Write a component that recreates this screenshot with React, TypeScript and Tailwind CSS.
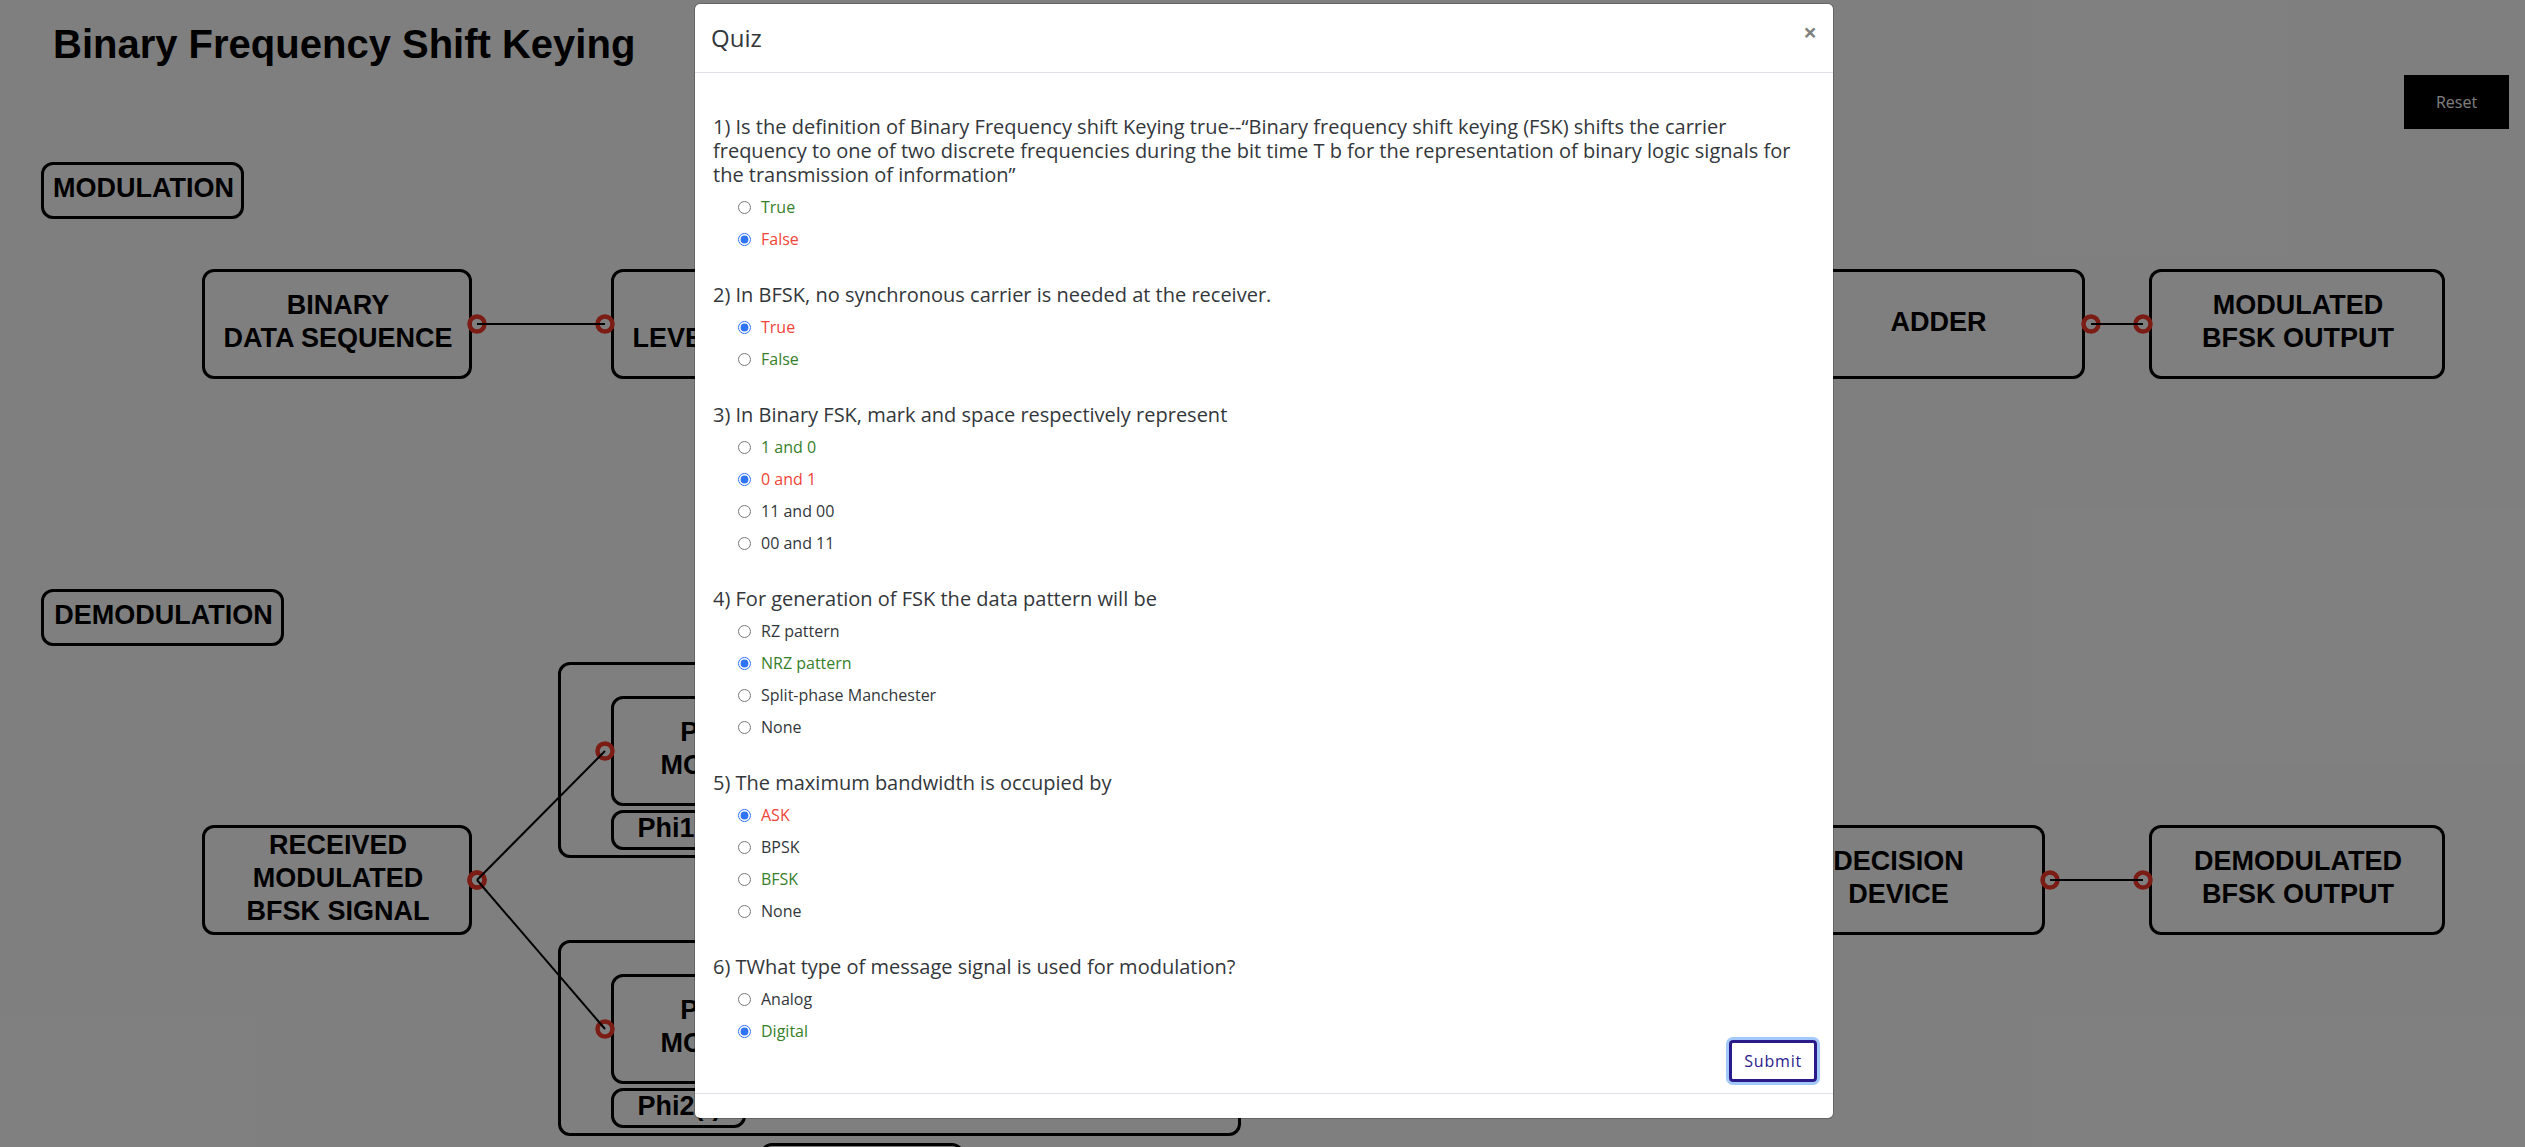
type Tone = "plain" | "right" | "wrong";
type Option = { label: string; tone?: Tone; checked?: boolean };
type Question = { text: string; options: Option[] };

const questions: Question[] = [
  {
    text: "1) Is the definition of Binary Frequency shift Keying true--“Binary frequency shift keying (FSK) shifts the carrier frequency to one of two discrete frequencies during the bit time T b for the representation of binary logic signals for the transmission of information”",
    options: [
      { label: "True", tone: "right" },
      { label: "False", tone: "wrong", checked: true },
    ],
  },
  {
    text: "2) In BFSK, no synchronous carrier is needed at the receiver.",
    options: [
      { label: "True", tone: "wrong", checked: true },
      { label: "False", tone: "right" },
    ],
  },
  {
    text: "3) In Binary FSK, mark and space respectively represent",
    options: [
      { label: "1 and 0", tone: "right" },
      { label: "0 and 1", tone: "wrong", checked: true },
      { label: "11 and 00" },
      { label: "00 and 11" },
    ],
  },
  {
    text: "4) For generation of FSK the data pattern will be",
    options: [
      { label: "RZ pattern" },
      { label: "NRZ pattern", tone: "right", checked: true },
      { label: "Split-phase Manchester" },
      { label: "None" },
    ],
  },
  {
    text: "5) The maximum bandwidth is occupied by",
    options: [
      { label: "ASK", tone: "wrong", checked: true },
      { label: "BPSK" },
      { label: "BFSK", tone: "right" },
      { label: "None" },
    ],
  },
  {
    text: "6) TWhat type of message signal is used for modulation?",
    options: [{ label: "Analog" }, { label: "Digital", tone: "right", checked: true }],
  },
];

const toneClass: Record<Tone, string> = {
  plain: "text-[#33373b]",
  right: "text-[#37802a]",
  wrong: "text-[#f04438]",
};

// Diagram nodes on the free canvas.
type Node = { x: number; y: number; w: number; h: number; lines?: string[] };

const nodes: Node[] = [
  { x: 41, y: 162, w: 203, h: 57, lines: ["MODULATION"] },
  { x: 202, y: 269, w: 270, h: 110, lines: ["BINARY", "DATA SEQUENCE"] },
  { x: 611, y: 269, w: 270, h: 110, lines: ["NRZ", "LEVEL ENCODER"] },
  { x: 1790, y: 269, w: 295, h: 110, lines: ["ADDER"] },
  { x: 2149, y: 269, w: 296, h: 110, lines: ["MODULATED", "BFSK OUTPUT"] },
  { x: 41, y: 589, w: 243, h: 57, lines: ["DEMODULATION"] },
  { x: 558, y: 662, w: 683, h: 196 },
  { x: 611, y: 696, w: 270, h: 110, lines: ["PRODUCT", "MODULATOR"] },
  { x: 611, y: 810, w: 135, h: 40, lines: ["Phi1(t)"] },
  { x: 202, y: 825, w: 270, h: 110, lines: ["RECEIVED", "MODULATED", "BFSK SIGNAL"] },
  { x: 558, y: 940, w: 683, h: 196 },
  { x: 611, y: 974, w: 270, h: 110, lines: ["PRODUCT", "MODULATOR"] },
  { x: 611, y: 1088, w: 135, h: 40, lines: ["Phi2(t)"] },
  { x: 760, y: 1143, w: 204, h: 57 },
  { x: 1750, y: 825, w: 295, h: 110, lines: ["DECISION", "DEVICE"] },
  { x: 2149, y: 825, w: 296, h: 110, lines: ["DEMODULATED", "BFSK OUTPUT"] },
];

const wires = [
  [477, 324, 605, 324],
  [2091, 324, 2143, 324],
  [477, 880, 605, 751],
  [477, 880, 605, 1029],
  [2050, 880, 2143, 880],
];

function Diagram() {
  return (
    <div className="absolute inset-0 overflow-hidden font-['Liberation_Sans',Arial,sans-serif] text-[27px] leading-[33px] font-bold text-black">
      {nodes.map((n) => (
        <div
          key={`${n.x}-${n.y}`}
          className="absolute flex flex-col items-center justify-center rounded-xl border-3 border-black pb-1 pl-0.5 whitespace-nowrap"
          style={{ left: n.x, top: n.y, width: n.w, height: n.h }}
        >
          {n.lines?.map((l) => (
            <span key={l}>{l}</span>
          ))}
        </div>
      ))}
      <svg className="absolute inset-0 size-full" aria-hidden="true">
        {wires.map(([x1, y1, x2, y2]) => (
          <g key={`${x1}-${y1}-${y2}`} fill="none">
            <circle cx={x1} cy={y1} r="7.5" stroke="#f63a2b" strokeWidth="4.5" />
            <circle cx={x2} cy={y2} r="7.5" stroke="#f63a2b" strokeWidth="4.5" />
          </g>
        ))}
        {wires.map(([x1, y1, x2, y2]) => (
          <line key={`${x1}-${y1}-${y2}`} x1={x1} y1={y1} x2={x2} y2={y2} stroke="#000" strokeWidth="2" />
        ))}
      </svg>
    </div>
  );
}

function QuizDialog() {
  return (
    <section
      role="dialog"
      aria-modal="true"
      aria-labelledby="quiz-title"
      className="w-full max-w-[1140px] rounded-md border border-black/20 bg-white bg-clip-padding"
    >
      <header className="flex items-start justify-between border-b border-[#dee2e6] p-4">
        <h2 id="quiz-title" className="text-2xl leading-9">Quiz</h2>
        <button type="button" aria-label="Close" className="text-2xl leading-6 font-bold text-black/50">
          ×
        </button>
      </header>
      <form className="flex flex-col pt-[42px] pr-4 pb-[11px] pl-[18px]" onSubmit={(e) => e.preventDefault()}>
        <div className="flex flex-col gap-7">
          {questions.map((q, i) => (
            <fieldset key={q.text}>
              <legend className="pb-1 text-xl leading-6">{q.text}</legend>
              {q.options.map((o) => (
                <label
                  key={o.label}
                  className={`flex h-8 w-fit items-center gap-2.5 pl-[25px] text-base ${toneClass[o.tone ?? "plain"]}`}
                >
                  <input
                    type="radio"
                    name={`question-${i}`}
                    defaultChecked={o.checked}
                    className="size-[13px] accent-[#2f73f8]"
                  />
                  {o.label}
                </label>
              ))}
            </fieldset>
          ))}
        </div>
        <button
          type="submit"
          className="-mt-[7px] h-[42px] self-end rounded-sm border-3 border-[#2a1a8a] px-3 text-base font-medium tracking-wider text-[#2a1a8a] ring-3 ring-[#a3c8fa]"
        >
          Submit
        </button>
      </form>
      <footer className="h-[25px] border-t border-[#dee2e6]" />
    </section>
  );
}

export default function App() {
  return (
    <div className="relative min-h-screen overflow-hidden bg-white font-['Open_Sans',sans-serif] text-[#33373b]">
      <Diagram />
      <header className="relative flex items-start justify-between pt-5 pr-4 pl-[53px] text-black">
        <h1 className="font-['Liberation_Sans',Arial,sans-serif] text-[40px] leading-[48px] font-bold">
          Binary Frequency Shift Keying
        </h1>
        <button type="button" className="mt-[55px] h-[54px] w-[105px] bg-black text-base text-white">
          Reset
        </button>
      </header>
      <div className="absolute inset-0 flex items-start justify-center bg-black/50 pt-[3px] pl-[3px]">
        <QuizDialog />
      </div>
    </div>
  );
}
